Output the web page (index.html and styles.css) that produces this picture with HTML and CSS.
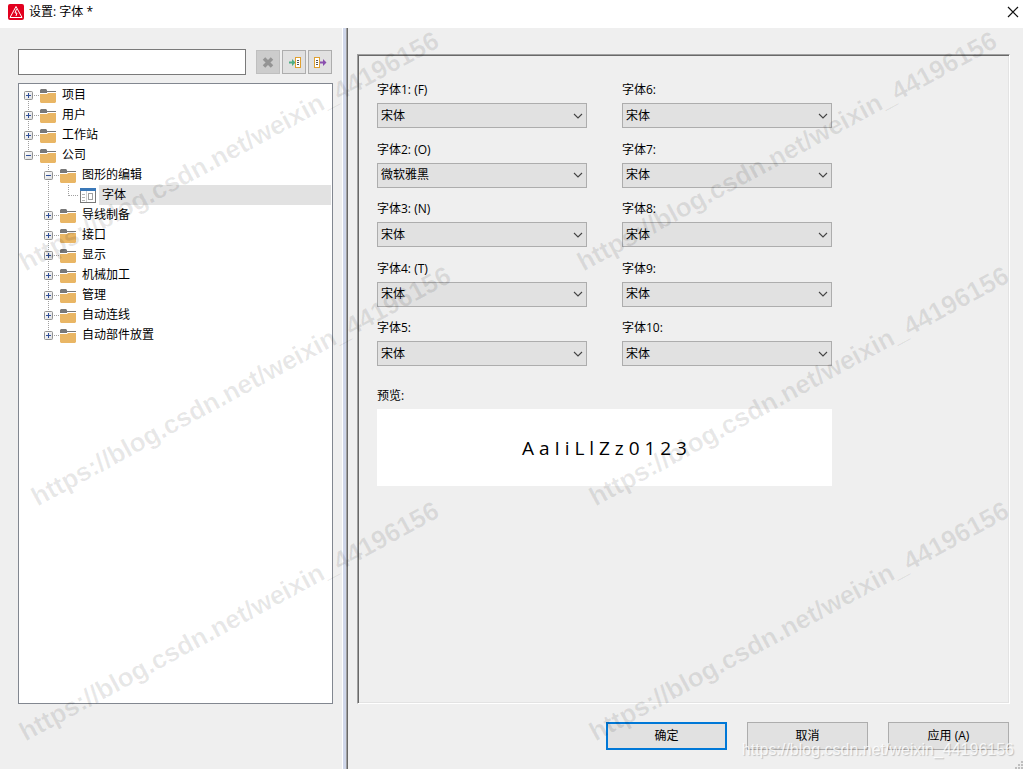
FILE: index.html
```html
<!DOCTYPE html>
<html lang="zh-CN">
<head>
<meta charset="utf-8">
<title>设置: 字体 *</title>
<link rel="stylesheet" href="styles.css">
</head>
<body>
<svg class="defs" aria-hidden="true">
  <defs>
    <linearGradient id="boxfill" x1="0" y1="0" x2="1" y2="1"><stop offset="0" stop-color="#fff"/><stop offset="1" stop-color="#dcdcdc"/></linearGradient>
    <symbol id="box" viewBox="0 0 20 20"><rect x="5.500" y="6.500" width="8" height="8" rx="1" fill="url(#boxfill)" stroke="#919191"/><path d="M7 10.500h5" stroke="#2f4f9a"/><path d="M15 10.500h5" stroke="#a0a0a0" stroke-dasharray="1 1"/></symbol>
    <symbol id="cross" viewBox="0 0 20 20"><path d="M9.500 8v5" stroke="#2f4f9a"/></symbol>
    <symbol id="up" viewBox="0 0 20 20"><path d="M9.500 0v6" stroke="#a0a0a0" stroke-dasharray="1 1"/></symbol>
    <symbol id="down" viewBox="0 0 20 20"><path d="M9.500 16v4" stroke="#a0a0a0" stroke-dasharray="1 1"/></symbol>
    <symbol id="line" viewBox="0 0 20 20"><path d="M9.500 0v20" stroke="#a0a0a0" stroke-dasharray="1 1"/></symbol>
    <symbol id="corner" viewBox="0 0 20 20"><path d="M9.500 0v11M10 10.500h10" stroke="#a0a0a0" stroke-dasharray="1 1" fill="none"/></symbol>
    <symbol id="folder" viewBox="0 0 16 16"><path d="M0 4V2l1-1h5l1 1v1h9v1H7v1H0z" fill="#787878"/><path d="M0 6h7l1-1h8v9l-1 1H1l-1-1z" fill="#e9b665"/></symbol>
    <symbol id="form" viewBox="0 0 16 16"><rect x=".5" y=".5" width="15" height="14" fill="#fff" stroke="#787878"/><path d="M0 0h16v3H0z" fill="#3a78b8"/><path d="M2 6.500h3M2 9.500h3M2 12.500h3" stroke="#b4b4b4"/><path d="M6.500 3v11" stroke="#d0d0d0"/><rect x="8.500" y="5.500" width="4" height="6" fill="none" stroke="#a0a0a0"/></symbol>
    <symbol id="chevron" viewBox="0 0 10 6"><path d="M1 1l4 4 4-4" fill="none" stroke="#444" stroke-width="1.100"/></symbol>
  </defs>
</svg>
<div class="window">
  <header class="titlebar">
    <svg class="logo" viewBox="0 0 16 16" aria-hidden="true"><rect width="16" height="16" rx="2" fill="#e2001f"/><path d="M8 2.500L14 13.500H2z" fill="none" stroke="#fff"/><path d="M8.500 5L7 9h2l-1 3" fill="none" stroke="#fff"/></svg>
    <h1 class="title">设置: 字体 *</h1>
    <button class="close" aria-label="关闭"><svg viewBox="0 0 12 12"><path d="M1 1l10 10M11 1L1 11" stroke="#111" stroke-width="1.200"/></svg></button>
  </header>
  <div class="body">
    <aside class="sidebar">
      <div class="toolbar">
        <input class="search" type="text" aria-label="搜索">
        <button class="tool tool-off" aria-label="清除" disabled><svg viewBox="0 0 16 16"><path d="M4 4.500l8 8M12 4.500l-8 8" stroke="#949494" stroke-width="3.500"/></svg></button>
        <button class="tool" aria-label="导入"><svg viewBox="0 0 16 16"><path d="M3 7.500h3V5l3.500 3.500L6 12V9.500H3z" fill="#4fae85"/><rect x="9.500" y="3.500" width="5" height="10" fill="#fff" stroke="#e0a030"/><path d="M11 6.500h2M11 8.500h2M11 10.500h2" stroke="#555"/></svg></button>
        <button class="tool" aria-label="导出"><svg viewBox="0 0 16 16"><rect x="2.500" y="3.500" width="5" height="10" fill="#fff" stroke="#e0a030"/><path d="M4 6.500h2M4 8.500h2M4 10.500h2" stroke="#555"/><path d="M8 7.500h3V5l3.500 3.500L11 12V9.500H8z" fill="#8a4fae"/></svg></button>
      </div>
      <ul class="tree" role="tree" aria-label="设置">
        <li><div class="node"><button class="guide" aria-label="展开"><svg viewBox="0 0 20 20"><use href="#box"/><use href="#cross"/><use href="#down"/></svg></button><svg class="icon"><use href="#folder"/></svg><span class="label">项目</span></div></li>
        <li><div class="node"><button class="guide" aria-label="展开"><svg viewBox="0 0 20 20"><use href="#up"/><use href="#box"/><use href="#cross"/><use href="#down"/></svg></button><svg class="icon"><use href="#folder"/></svg><span class="label">用户</span></div></li>
        <li><div class="node"><button class="guide" aria-label="展开"><svg viewBox="0 0 20 20"><use href="#up"/><use href="#box"/><use href="#cross"/><use href="#down"/></svg></button><svg class="icon"><use href="#folder"/></svg><span class="label">工作站</span></div></li>
        <li><div class="node"><button class="guide" aria-label="折叠"><svg viewBox="0 0 20 20"><use href="#up"/><use href="#box"/></svg></button><svg class="icon"><use href="#folder"/></svg><span class="label">公司</span></div>
          <ul class="branch">
            <li><div class="node"><button class="guide" aria-label="折叠"><svg viewBox="0 0 20 20"><use href="#up"/><use href="#box"/><use href="#down"/></svg></button><svg class="icon"><use href="#folder"/></svg><span class="label">图形的编辑</span></div>
              <ul>
                <li><div class="node"><svg class="guide" viewBox="0 0 20 20"><use href="#line"/></svg><svg class="guide" viewBox="0 0 20 20"><use href="#corner"/></svg><svg class="icon"><use href="#form"/></svg><span class="label label-on">字体</span></div></li>
              </ul>
            </li>
            <li><div class="node"><button class="guide" aria-label="展开"><svg viewBox="0 0 20 20"><use href="#up"/><use href="#box"/><use href="#cross"/><use href="#down"/></svg></button><svg class="icon"><use href="#folder"/></svg><span class="label">导线制备</span></div></li>
            <li><div class="node"><button class="guide" aria-label="展开"><svg viewBox="0 0 20 20"><use href="#up"/><use href="#box"/><use href="#cross"/><use href="#down"/></svg></button><svg class="icon"><use href="#folder"/></svg><span class="label">接口</span></div></li>
            <li><div class="node"><button class="guide" aria-label="展开"><svg viewBox="0 0 20 20"><use href="#up"/><use href="#box"/><use href="#cross"/><use href="#down"/></svg></button><svg class="icon"><use href="#folder"/></svg><span class="label">显示</span></div></li>
            <li><div class="node"><button class="guide" aria-label="展开"><svg viewBox="0 0 20 20"><use href="#up"/><use href="#box"/><use href="#cross"/><use href="#down"/></svg></button><svg class="icon"><use href="#folder"/></svg><span class="label">机械加工</span></div></li>
            <li><div class="node"><button class="guide" aria-label="展开"><svg viewBox="0 0 20 20"><use href="#up"/><use href="#box"/><use href="#cross"/><use href="#down"/></svg></button><svg class="icon"><use href="#folder"/></svg><span class="label">管理</span></div></li>
            <li><div class="node"><button class="guide" aria-label="展开"><svg viewBox="0 0 20 20"><use href="#up"/><use href="#box"/><use href="#cross"/><use href="#down"/></svg></button><svg class="icon"><use href="#folder"/></svg><span class="label">自动连线</span></div></li>
            <li><div class="node"><button class="guide" aria-label="展开"><svg viewBox="0 0 20 20"><use href="#up"/><use href="#box"/><use href="#cross"/></svg></button><svg class="icon"><use href="#folder"/></svg><span class="label">自动部件放置</span></div></li>
          </ul>
        </li>
      </ul>
    </aside>
    <div class="splitter"></div>
    <main class="content">
      <section class="panel">
        <div class="fonts">
          <div class="field"><label for="f1">字体1: (F)</label><div class="combo"><select id="f1"><option>宋体</option></select><svg class="arrow"><use href="#chevron"/></svg></div></div>
          <div class="field"><label for="f6">字体6:</label><div class="combo"><select id="f6"><option>宋体</option></select><svg class="arrow"><use href="#chevron"/></svg></div></div>
          <div class="field"><label for="f2">字体2: (O)</label><div class="combo"><select id="f2"><option>微软雅黑</option></select><svg class="arrow"><use href="#chevron"/></svg></div></div>
          <div class="field"><label for="f7">字体7:</label><div class="combo"><select id="f7"><option>宋体</option></select><svg class="arrow"><use href="#chevron"/></svg></div></div>
          <div class="field"><label for="f3">字体3: (N)</label><div class="combo"><select id="f3"><option>宋体</option></select><svg class="arrow"><use href="#chevron"/></svg></div></div>
          <div class="field"><label for="f8">字体8:</label><div class="combo"><select id="f8"><option>宋体</option></select><svg class="arrow"><use href="#chevron"/></svg></div></div>
          <div class="field"><label for="f4">字体4: (T)</label><div class="combo"><select id="f4"><option>宋体</option></select><svg class="arrow"><use href="#chevron"/></svg></div></div>
          <div class="field"><label for="f9">字体9:</label><div class="combo"><select id="f9"><option>宋体</option></select><svg class="arrow"><use href="#chevron"/></svg></div></div>
          <div class="field"><label for="f5">字体5:</label><div class="combo"><select id="f5"><option>宋体</option></select><svg class="arrow"><use href="#chevron"/></svg></div></div>
          <div class="field"><label for="f10">字体10:</label><div class="combo"><select id="f10"><option>宋体</option></select><svg class="arrow"><use href="#chevron"/></svg></div></div>
        </div>
        <div class="preview">
          <div class="caption">预览:</div>
          <div class="sample">A a I i L l Z z 0 1 2 3</div>
        </div>
      </section>
      <footer class="actions">
        <button class="action action-main">确定</button>
        <button class="action">取消</button>
        <button class="action">应用 (A)</button>
      </footer>
    </main>
  </div>
  <div class="marks" aria-hidden="true">
    <span class="mark m1">https://blog.csdn.net/weixin_44196156</span>
    <span class="mark m2">https://blog.csdn.net/weixin_44196156</span>
    <span class="mark m3">https://blog.csdn.net/weixin_44196156</span>
    <span class="mark m4">https://blog.csdn.net/weixin_44196156</span>
    <span class="mark m5">https://blog.csdn.net/weixin_44196156</span>
    <span class="mark m6">https://blog.csdn.net/weixin_44196156</span>
    <span class="credit">https://blog.csdn.net/weixin_44196156</span>
    <svg class="grip" viewBox="0 0 8 8"><path d="M6 0h2v2H6zM3 3h2v2H3zM6 3h2v2H6zM0 6h2v2H0zM3 6h2v2H3zM6 6h2v2H6z" fill="#bfbfbf"/></svg>
  </div>
</div>
</body>
</html>
```
FILE: styles.css
```css
* { box-sizing: border-box; }
body { margin: 0; }
body, button, input, select {
  font: 12px/20px "Open Sans", "Noto Sans CJK SC", sans-serif;
  color: #000;
}
button { padding: 0; }
ul { list-style: none; margin: 0; padding: 0; }
svg { display: block; }
.defs { position: absolute; width: 0; height: 0; }

.window {
  position: relative;
  display: flex;
  flex-direction: column;
  height: 100vh;
  overflow: hidden;
  background: #efefef;
}
.titlebar {
  display: flex;
  align-items: center;
  gap: 5px;
  flex: none;
  height: 28px;
  padding: 0 4px 4px 8px;
  background: #fff;
}
.logo { width: 16px; height: 16px; }
.title { flex: 1; margin: 0; font-size: 12px; font-weight: 400; line-height: 22px; }
.close { width: 12px; height: 12px; border: 0; background: none; }

.body { display: flex; flex: 1; min-height: 0; }
.sidebar {
  display: flex;
  flex-direction: column;
  gap: 8px;
  flex: 0 0 342px;
  padding: 21px 9px 65px 18px;
}
.toolbar { display: flex; align-items: center; gap: 2px; padding-right: 1px; }
.search {
  flex: 1;
  min-width: 0;
  height: 26px;
  margin-right: 8px;
  border: 1px solid #7a7a7a;
  background: #fff;
}
.tool {
  display: grid;
  place-items: center;
  width: 24px;
  height: 24px;
  border: 1px solid #adadad;
  background: #e1e1e1;
}
.tool svg { width: 16px; height: 16px; }
.tool-off { border-color: #bfbfbf; background: #ccc; }

.tree { flex: 1; padding-top: 1px; border: 1px solid #828790; background: #fff; }
.branch { padding-left: 20px; }
.node { display: flex; align-items: center; height: 20px; }
.guide { flex: none; width: 20px; height: 20px; border: 0; background: none; }
.icon { flex: none; width: 16px; height: 16px; margin: 2px 3px 0 1px; }
.label { flex: 1; height: 20px; padding-left: 3px; line-height: 20px; }
.label-on { margin-right: 1px; background: #e2e2e2; }

.splitter {
  flex: none;
  width: 6px;
  border: solid;
  border-width: 0 1px;
  border-color: #696969 #696969 #696969 #fff;
  box-shadow: inset -1px 0 #a0a0a0;
  background: #d0d7ea;
}
.content { display: flex; flex-direction: column; flex: 1; min-width: 0; padding: 26px 13px 19px 9px; }
.panel {
  flex: 1;
  padding: 25px 19px;
  border: 1px solid;
  border-color: #a0a0a0 #fff #fff #a0a0a0;
  box-shadow: inset 1px 1px #696969, inset -1px -1px #e3e3e3;
}
.fonts {
  display: grid;
  grid-template-columns: 210px 210px;
  align-content: space-between;
  column-gap: 35px;
  min-height: 286px;
}
.field label { display: block; height: 23px; }
.combo { display: grid; align-items: center; }
.combo select, .arrow { grid-area: 1 / 1; }
.combo select {
  width: 100%;
  height: 25px;
  padding: 0 24px 0 3px;
  border: 1px solid #adadad;
  border-radius: 0;
  appearance: none;
  background: #e1e1e1;
}
.arrow { justify-self: end; width: 10px; height: 6px; margin-right: 4px; pointer-events: none; }
.preview { width: 455px; margin-top: 20px; }
.caption { height: 23px; }
.sample {
  display: grid;
  place-items: center;
  height: 77px;
  background: #fff;
  font-size: 19px;
}
.actions { display: flex; justify-content: flex-end; gap: 20px; margin-top: 18px; padding-right: 1px; }
.action { width: 121px; height: 28px; border: 1px solid #adadad; background: #e1e1e1; }
.action-main { border: 2px solid #0078d7; }

.marks { position: absolute; inset: 0; pointer-events: none; }
.mark {
  position: absolute;
  font: bold 26px/28px "Liberation Sans", Arial, sans-serif;
  color: rgba(0, 0, 0, 0.09);
  white-space: nowrap;
  transform: rotate(-28.5deg);
  transform-origin: 0 100%;
}
.m1 { left: 28px; top: 248px; }
.m2 { left: 40px; top: 483px; }
.m3 { left: 28px; top: 718px; }
.m4 { left: 586px; top: 248px; }
.m5 { left: 598px; top: 483px; }
.m6 { left: 598px; top: 718px; }
.credit {
  position: absolute;
  right: 9px;
  bottom: 11px;
  font: 16px/16px "Liberation Sans", Arial, sans-serif;
  color: rgba(255, 255, 255, 0.8);
  text-shadow: 1px 1px 1px rgba(0, 0, 0, 0.2);
}
.grip { position: absolute; right: 0; bottom: 0; width: 8px; height: 8px; }
```
